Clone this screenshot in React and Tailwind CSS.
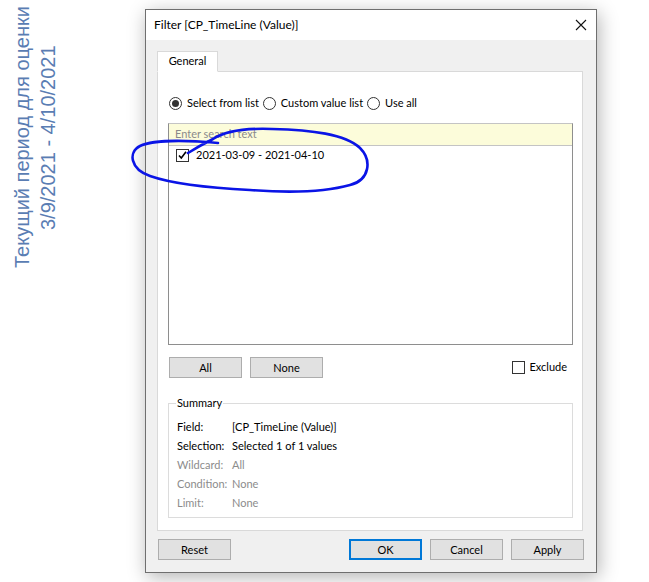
import React from 'react';

const ui = { fontFamily: 'Lato, "Noto Sans", sans-serif' };

// кнопка в стиле Windows
const WinButton = ({ children, primary }) => (
  <button
    className={
      primary
        ? 'w-[73px] h-[21px] bg-[#e1e1e1] border-2 border-[#0078d7] text-[11px] text-black leading-none'
        : 'w-[73px] h-[21px] bg-[#e1e1e1] border border-[#adadad] text-[11px] text-black leading-none'
    }
  >
    {children}
  </button>
);

const Radio = ({ checked, label }) => (
  <div className="flex items-center gap-[5px] mr-[4px]">
    <span className="w-[13px] h-[13px] rounded-full border border-[#333] bg-white flex items-center justify-center">
      {checked && <span className="w-[7px] h-[7px] rounded-full bg-[#333]" />}
    </span>
    <span>{label}</span>
  </div>
);

const Check = ({ checked }) => (
  <span className="w-[13px] h-[13px] border border-[#333] bg-white flex items-center justify-center shrink-0">
    {checked && (
      <svg width="11" height="11" viewBox="0 0 11 11">
        <path d="M2 5.5 L4.3 8 L9 1.8" fill="none" stroke="#000" strokeWidth="1.6" />
      </svg>
    )}
  </span>
);

const SummaryRow = ({ label, value, muted }) => (
  <div className={muted ? 'flex h-[19px] items-center text-[#8c8c8c]' : 'flex h-[19px] items-center text-black'}>
    <span className="w-[55px]">{label}</span>
    <span>{value}</span>
  </div>
);

function App() {
  return (
    <div className="relative w-[649px] h-[582px] bg-white flex overflow-hidden" style={ui}>
      {/* подпись слева */}
      <div className="w-[145px] shrink-0">
        <div
          className="ml-[9px] mt-[4px] h-[267px] [writing-mode:vertical-rl] rotate-180 text-center text-[20px] leading-[26px] text-[#5a7db3]"
          style={{ fontFamily: '"Liberation Sans", Arial, sans-serif' }}
        >
          <div>Текущий период для оценки</div>
          <div>3/9/2021 - 4/10/2021</div>
        </div>
      </div>

      {/* окно фильтра */}
      <div className="mt-[9px] w-[452px] h-[564px] border border-[#6f6f6f] bg-[#f0f0f0] shadow-[2px_4px_18px_rgba(0,0,0,0.3)] flex flex-col shrink-0">
        <div className="h-[30px] bg-white flex items-center justify-between pl-[8px] pr-[9px] text-[12px] text-black">
          <span>Filter [CP_TimeLine (Value)]</span>
          <svg width="12" height="12" viewBox="0 0 12 12">
            <path d="M1 1 L11 11 M11 1 L1 11" stroke="#111" strokeWidth="1.1" />
          </svg>
        </div>

        <div className="pl-[11px] pt-[11px] text-[11px] text-black">
          <div className="relative z-10 -mb-px w-[61px] h-[21px] bg-white border border-[#d9d9d9] border-b-white flex items-center justify-center">
            General
          </div>
          <div className="w-[426px] h-[460px] bg-white border border-[#d9d9d9] pl-[10px] pt-[21px]">
            <div className="flex items-center h-[20px] pl-px">
              <Radio checked label="Select from list" />
              <Radio label="Custom value list" />
              <Radio label="Use all" />
            </div>

            <div className="mt-[10px] w-[405px] h-[222px] border border-[#8e8e8e] border-t-[#c4c4c4] flex flex-col">
              <div className="h-[22px] bg-[#fcfcda] border-b border-[#c4c4c4] flex items-center pl-[6px] text-[#8a8a8a]">
                Enter search text
              </div>
              <div className="flex items-center gap-[7px] pl-[7px] h-[18px]">
                <Check checked />
                <span>2021-03-09 - 2021-04-10</span>
              </div>
            </div>

            <div className="mt-[12px] w-[405px] flex items-center pl-px">
              <div className="flex gap-[8px]">
                <WinButton>All</WinButton>
                <WinButton>None</WinButton>
              </div>
              <div className="ml-auto mr-[6px] flex items-center gap-[4px]">
                <Check />
                <span>Exclude</span>
              </div>
            </div>

            <div className="relative mt-[25px] w-[405px] h-[115px] border border-[#dcdcdc] pl-[8px] pt-[14px]">
              <span className="absolute left-[7px] -top-[9px] bg-white px-px leading-[16px]">Summary</span>
              <SummaryRow label="Field:" value="[CP_TimeLine (Value)]" />
              <SummaryRow label="Selection:" value="Selected 1 of 1 values" />
              <SummaryRow label="Wildcard:" value="All" muted />
              <SummaryRow label="Condition:" value="None" muted />
              <SummaryRow label="Limit:" value="None" muted />
            </div>
          </div>
        </div>

        <div className="mt-[8px] pl-[12px] pr-[12px] flex">
          <WinButton>Reset</WinButton>
          <div className="ml-auto flex gap-[8px]">
            <WinButton primary>OK</WinButton>
            <WinButton>Cancel</WinButton>
            <WinButton>Apply</WinButton>
          </div>
        </div>
      </div>

      {/* обводка от руки */}
      <svg className="absolute left-0 top-0 pointer-events-none" width="649" height="582" viewBox="0 0 649 582">
        <path
          d="M188 153 C196 148 205 143 213 139 C225 131 245 128 272 129 C312 130 345 134 360 148 C372 160 370 180 350 185 C325 192 290 193 250 190 C210 188 170 183 150 176 C130 169 128 152 140 146 C152 140 185 140 218 143"
          fill="none"
          stroke="#0a14e6"
          strokeWidth="2.6"
          strokeLinecap="round"
        />
      </svg>
    </div>
  );
}

export default App;
